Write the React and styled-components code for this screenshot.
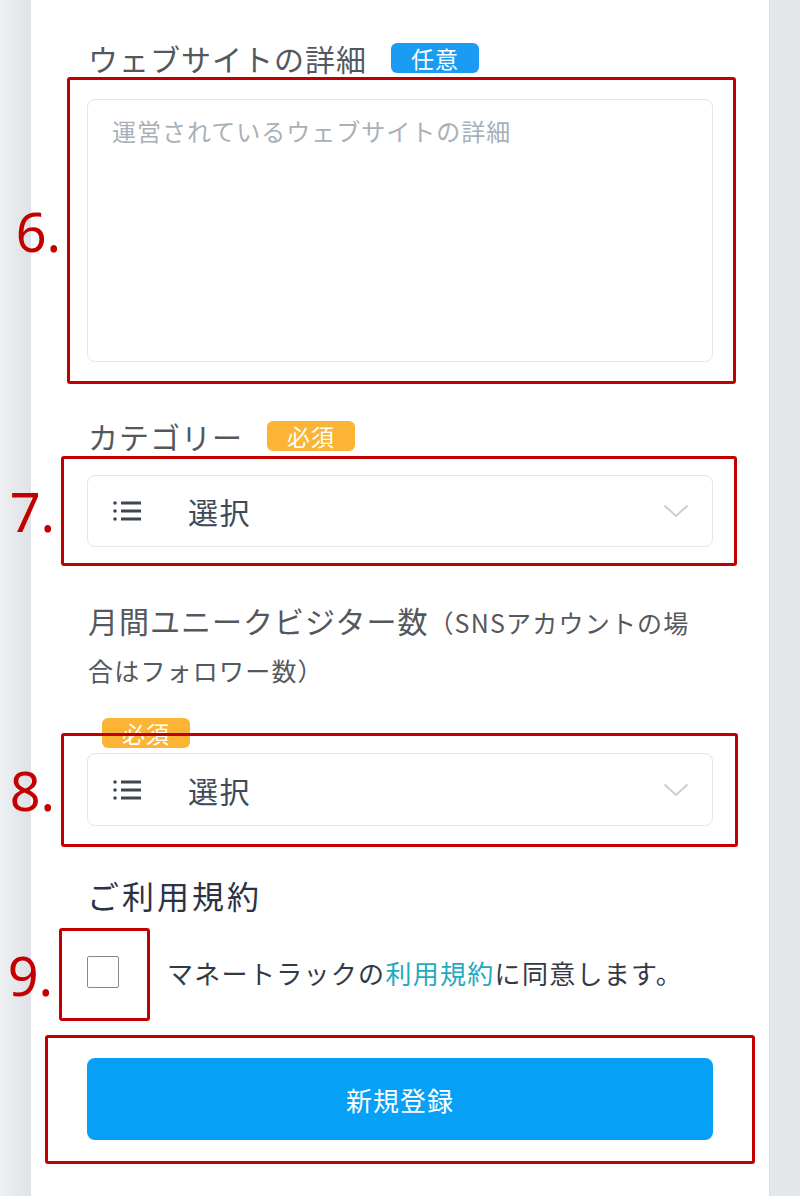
import React from "react";
import styled, { createGlobalStyle } from "styled-components";

const GlobalStyle = createGlobalStyle`
  html, body {
    margin: 0;
    padding: 0;
  }
  body {
    background: linear-gradient(to right, #eef0f2 0, #dee2e6 31px, #e4e7ea 31px);
    font-family: "Noto Sans CJK JP", "Noto Sans", sans-serif;
  }
`;

const Card = styled.main`
  margin: 0 30px 0 31px;
  min-height: 1196px;
  box-sizing: border-box;
  background: #fff;
  padding: 38px 56px 40px 56px;
  border-right: 1px solid #dadee2;
`;

const LabelRow = styled.div`
  display: flex;
  align-items: center;
  gap: 24px;
  height: 40px;
  margin-top: ${(p) => p.$top || 0}px;
`;

const Label = styled.label`
  font-size: 30px;
  letter-spacing: 1px;
  color: #54585d;
  line-height: 40px;
  padding-left: 1px;
`;

const LongLabel = styled(Label)`
  display: block;
  line-height: 48px;
  margin-top: ${(p) => p.$top || 0}px;
`;

const Small = styled.span`
  font-size: 25px;
  letter-spacing: 1.2px;
  line-height: 0;
`;

const Badge = styled.span`
  display: inline-flex;
  align-items: center;
  justify-content: center;
  width: 88px;
  height: 30px;
  border-radius: 6px;
  font-size: 23px;
  letter-spacing: 1px;
  color: #fff;
  background: ${(p) => (p.$required ? "#fbb435" : "#1a9cf3")};
  margin-left: ${(p) => p.$left || 0}px;
  margin-top: ${(p) => p.$top || 0}px;
  margin-bottom: ${(p) => p.$bottom || 0}px;
`;

const Annotated = styled.div`
  position: relative;
  margin-top: ${(p) => p.$top || 0}px;
`;

const Frame = styled.div`
  position: absolute;
  top: -${(p) => p.$t}px;
  right: -${(p) => p.$r}px;
  bottom: -${(p) => p.$b}px;
  left: -${(p) => p.$l}px;
  border: 3px solid #c20000;
  border-radius: 3px;
  pointer-events: none;
`;

const Num = styled.span`
  position: absolute;
  right: calc(100% + 9px);
  top: 50%;
  transform: translateY(-50%);
  font-family: "Noto Sans", sans-serif;
  font-size: 54px;
  line-height: 1;
  color: #c20000;
`;

const TextArea = styled.textarea`
  display: block;
  width: 100%;
  height: 263px;
  box-sizing: border-box;
  border: 1.5px solid #e3e5e8;
  border-radius: 8px;
  padding: 14px 24px;
  resize: none;
  font-family: inherit;
  font-size: 24px;
  letter-spacing: 1px;
  line-height: 34px;
  color: #333;
  outline: none;
  &::placeholder {
    color: #a8b0b8;
  }
`;

const Select = styled.div`
  display: flex;
  align-items: center;
  height: ${(p) => p.$h || 72}px;
  box-sizing: border-box;
  border: 1.5px solid #e3e5e8;
  border-radius: 8px;
  padding: 0 23px 0 25px;
`;

const SelectText = styled.span`
  flex: 1;
  margin-left: 47px;
  font-size: 30px;
  letter-spacing: 1.5px;
  color: #3e4a5a;
`;

const Heading = styled.h2`
  margin: 47px 0 0;
  font-weight: 400;
  font-size: 32px;
  letter-spacing: 3px;
  line-height: 44px;
  color: #2c3345;
`;

const CheckRow = styled.div`
  display: flex;
  align-items: center;
  gap: 48px;
  margin-top: 38px;
  height: 34px;
`;

const Box = styled.span`
  display: block;
  width: 30px;
  height: 30px;
  border: 1.5px solid #8a8a8a;
  border-radius: 2px;
  background: #fff;
`;

const AgreeText = styled.span`
  font-size: 26px;
  letter-spacing: 1.3px;
  color: #333a44;
`;

const Link = styled.a`
  color: #22aac0;
  text-decoration: none;
`;

const Button = styled.button`
  display: block;
  width: 100%;
  height: 82px;
  border: none;
  border-radius: 8px;
  background: #06a0f6;
  color: #fff;
  font-family: inherit;
  font-size: 26px;
  letter-spacing: 1px;
`;

const ListIcon = () => (
  <svg width="28" height="22" viewBox="0 0 28 22">
    <g fill="#3e4650">
      <circle cx="2" cy="3" r="1.8" />
      <circle cx="2" cy="11" r="1.8" />
      <circle cx="2" cy="19" r="1.8" />
      <rect x="8" y="1.5" width="20" height="3" />
      <rect x="8" y="9.5" width="20" height="3" />
      <rect x="8" y="17.5" width="20" height="3" />
    </g>
  </svg>
);

const Chevron = () => (
  <svg width="26" height="14" viewBox="0 0 26 14">
    <path d="M1.5 1.5 L13 12 L24.5 1.5" fill="none" stroke="#c9cdd2" strokeWidth="2" />
  </svg>
);

const Annot = ({ num, t, r, b, l, top, children }) => (
  <Annotated $top={top}>
    {children}
    <Frame $t={t} $r={r} $b={b} $l={l}>
      {num && <Num>{num}</Num>}
    </Frame>
  </Annotated>
);

const Dropdown = ({ h }) => (
  <Select $h={h}>
    <ListIcon />
    <SelectText>選択</SelectText>
    <Chevron />
  </Select>
);

export default function App() {
  return (
    <>
      <GlobalStyle />
      <Card>
        <LabelRow>
          <Label>ウェブサイトの詳細</Label>
          <Badge>任意</Badge>
        </LabelRow>
        <Annot num="6." t={22} r={23} b={22} l={20} top={21}>
          <TextArea placeholder="運営されているウェブサイトの詳細" />
        </Annot>

        <LabelRow $top={54}>
          <Label>カテゴリー</Label>
          <Badge $required>必須</Badge>
        </LabelRow>
        <Annot num="7." t={19} r={24} b={19} l={26} top={19}>
          <Dropdown />
        </Annot>

        <LongLabel $top={49}>
          月間ユニークビジター数<Small>（SNSアカウントの場<br />合はフォロワー数）</Small>
        </LongLabel>
        <Badge $required $left={15} $top={26} $bottom={5}>
          必須
        </Badge>
        <Annot num="8." t={20} r={25} b={21} l={26}>
          <Dropdown h={73} />
        </Annot>

        <Heading>ご利用規約</Heading>
        <CheckRow>
          <Annot num="9." t={28} r={31} b={33} l={28}>
            <Box />
          </Annot>
          <AgreeText>
            マネートラックの<Link href="#">利用規約</Link>に同意します。
          </AgreeText>
        </CheckRow>

        <Annot t={23} r={42} b={24} l={42} top={69}>
          <Button type="button">新規登録</Button>
        </Annot>
      </Card>
    </>
  );
}
